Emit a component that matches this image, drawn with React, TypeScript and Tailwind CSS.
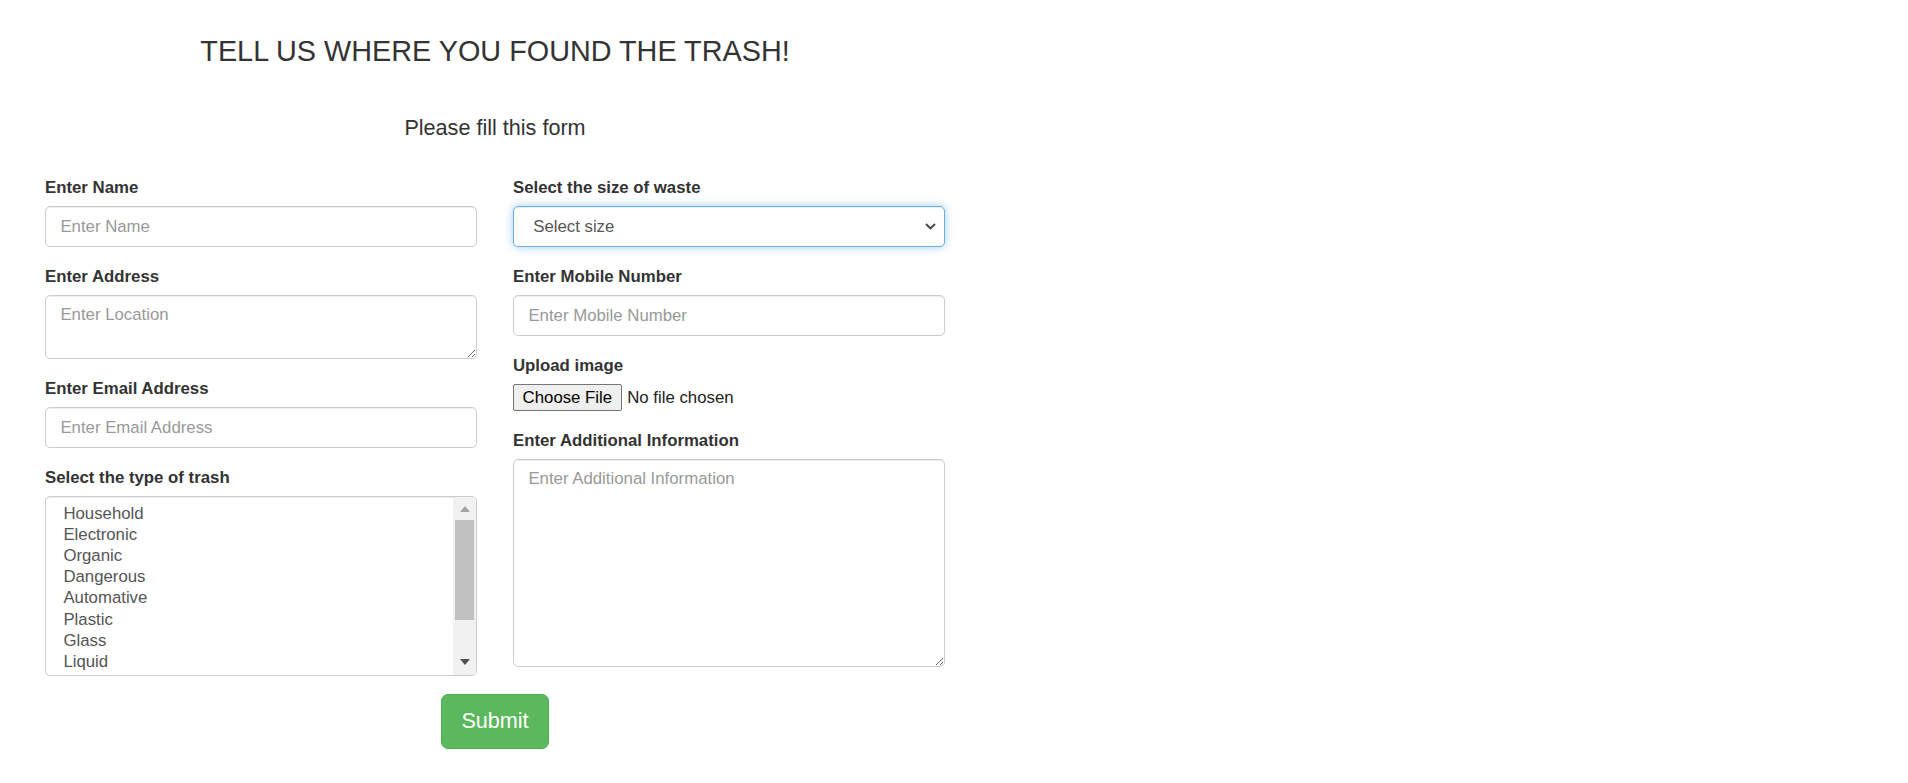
import React from "react";

const inputCls =
  "block w-full h-[41px] px-[14.4px] py-[7.2px] text-[16.8px] leading-[24px] text-[#555] bg-white border border-[#ccc] rounded-[5px] shadow-[inset_0_1px_1px_rgba(0,0,0,0.075)] placeholder:text-[#999] outline-none font-['Liberation_Sans',Arial,sans-serif]";

const textareaCls =
  "block w-full px-[14.4px] py-[7.2px] text-[16.8px] leading-[24px] text-[#555] bg-white border border-[#ccc] rounded-[5px] shadow-[inset_0_1px_1px_rgba(0,0,0,0.075)] placeholder:text-[#999] outline-none font-['Liberation_Sans',Arial,sans-serif]";

function Label({ children }: { children: React.ReactNode }) {
  return (
    <label className="block mb-[6px] text-[16.8px] leading-[24px] font-bold text-[#333]">
      {children}
    </label>
  );
}

function Group({ children }: { children: React.ReactNode }) {
  return <div className="mb-[18px]">{children}</div>;
}

const trashTypes = [
  "Household",
  "Electronic",
  "Organic",
  "Dangerous",
  "Automative",
  "Plastic",
  "Glass",
  "Liquid",
];

export default function App() {
  return (
    <div className="min-h-screen bg-white text-[#333] font-['Liberation_Sans',Arial,sans-serif]">
      <div className="w-[900px] ml-[45px]">
        <h3 className="pt-[36px] text-center text-[28.8px] leading-[31.7px] font-normal">
          TELL US WHERE YOU FOUND THE TRASH!
        </h3>
        <h4 className="mt-[48.6px] text-center text-[21.6px] leading-[23.8px] font-normal">
          Please fill this form
        </h4>
        <form className="mt-[36px]" onSubmit={(e) => e.preventDefault()}>
          <div className="grid grid-cols-2 gap-x-[36px]">
            <div>
              <Group>
                <Label>Enter Name</Label>
                <input type="text" placeholder="Enter Name" className={inputCls} />
              </Group>
              <Group>
                <Label>Enter Address</Label>
                <textarea placeholder="Enter Location" className={textareaCls + " h-[64px]"} />
              </Group>
              <Group>
                <Label>Enter Email Address</Label>
                <input type="email" placeholder="Enter Email Address" className={inputCls} />
              </Group>
              <Group>
                <Label>Select the type of trash</Label>
                <div className="flex h-[180px] w-full overflow-hidden bg-white border border-[#ccc] rounded-[5px] shadow-[inset_0_1px_1px_rgba(0,0,0,0.075)]">
                  <div className="flex-1 pt-[6.8px] pl-[17.4px] overflow-hidden">
                    {trashTypes.map((t) => (
                      <div key={t} className="h-[21.15px] text-[16.8px] leading-[19.3px] text-[#555]">
                        {t}
                      </div>
                    ))}
                  </div>
                  <div className="w-[23px] bg-[#f1f1f1] flex flex-col">
                    <div className="h-[23px] flex items-center justify-center">
                      <svg width="10" height="6" viewBox="0 0 10 6">
                        <polygon points="0,6 5,0 10,6" fill="#a3a3a3" />
                      </svg>
                    </div>
                    <div className="mx-[2px] h-[100px] bg-[#c1c1c1]" />
                    <div className="flex-1" />
                    <div className="h-[27px] flex items-center justify-center">
                      <svg width="10" height="6" viewBox="0 0 10 6">
                        <polygon points="0,0 10,0 5,6" fill="#505050" />
                      </svg>
                    </div>
                  </div>
                </div>
              </Group>
            </div>
            <div>
              <Group>
                <Label>Select the size of waste</Label>
                <div className="relative">
                  <select
                    defaultValue=""
                    className="block w-full h-[41px] pl-[19.2px] pr-[30px] text-[16.8px] leading-[24px] text-[#555] bg-white border border-[#66afe9] rounded-[5px] appearance-none outline-none shadow-[inset_0_1px_1px_rgba(0,0,0,0.075),0_0_9.6px_rgba(102,175,233,0.6)] font-['Liberation_Sans',Arial,sans-serif]"
                  >
                    <option value="">Select size</option>
                    <option value="small">Small</option>
                    <option value="medium">Medium</option>
                    <option value="large">Large</option>
                  </select>
                  <svg
                    className="absolute right-[9px] top-[17px] pointer-events-none"
                    width="11"
                    height="7"
                    viewBox="0 0 11 7"
                  >
                    <polyline points="1,1 5.5,5.5 10,1" fill="none" stroke="#444" strokeWidth="1.8" />
                  </svg>
                </div>
              </Group>
              <Group>
                <Label>Enter Mobile Number</Label>
                <input type="text" placeholder="Enter Mobile Number" className={inputCls} />
              </Group>
              <Group>
                <Label>Upload image</Label>
                <div className="flex items-center h-[27px]">
                  <button
                    type="button"
                    className="h-[27px] px-[8.6px] text-[16.8px] leading-[24px] text-black bg-[#efefef] border border-[#767676] rounded-[2px]"
                  >
                    Choose File
                  </button>
                  <span className="ml-[5.5px] text-[16.8px] leading-[24px] text-[#222]">No file chosen</span>
                </div>
              </Group>
              <Group>
                <Label>Enter Additional Information</Label>
                <textarea placeholder="Enter Additional Information" className={textareaCls + " h-[208px]"} />
              </Group>
            </div>
          </div>
          <div className="flex justify-center">
            <button
              type="submit"
              className="h-[55px] px-[19.2px] text-[21.6px] leading-[28.8px] text-white bg-[#5cb85c] border border-[#4cae4c] rounded-[7px]"
            >
              Submit
            </button>
          </div>
        </form>
      </div>
    </div>
  );
}
